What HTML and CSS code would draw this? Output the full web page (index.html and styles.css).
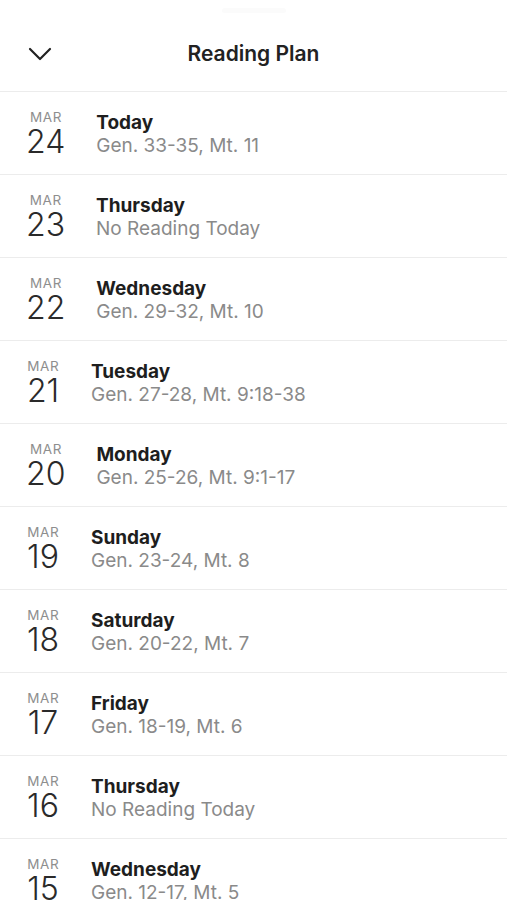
FILE: index.html
```html
<!DOCTYPE html>
<html lang="en">

<head>
    <meta charset="UTF-8">
    <meta name="viewport" content="width=device-width, initial-scale=1.0">
    <title>Reading Plan</title>
    <link rel="stylesheet" href="styles.css">
</head>

<body>
    <div class="sheet">
        <div class="grabber"></div>

        <!-- Thanh tiêu đề -->
        <div class="header">
            <button class="close">
                <svg width="24" height="14" viewBox="0 0 24 14">
                    <path d="M2 2 L12 12 L22 2" fill="none" stroke="#222" stroke-width="2.2" stroke-linecap="round" stroke-linejoin="round" />
                </svg>
            </button>
            <h1 class="title">Reading Plan</h1>
        </div>

        <!-- Danh sách ngày -->
        <ul class="plan">
            <li class="day">
                <div class="date"><span class="month">MAR</span><span class="num">24</span></div>
                <div class="info"><span class="name">Today</span><span class="passage">Gen. 33-35, Mt. 11</span></div>
            </li>
            <li class="day">
                <div class="date"><span class="month">MAR</span><span class="num">23</span></div>
                <div class="info"><span class="name">Thursday</span><span class="passage">No Reading Today</span></div>
            </li>
            <li class="day">
                <div class="date"><span class="month">MAR</span><span class="num">22</span></div>
                <div class="info"><span class="name">Wednesday</span><span class="passage">Gen. 29-32, Mt. 10</span></div>
            </li>
            <li class="day">
                <div class="date"><span class="month">MAR</span><span class="num">21</span></div>
                <div class="info"><span class="name">Tuesday</span><span class="passage">Gen. 27-28, Mt. 9:18-38</span></div>
            </li>
            <li class="day">
                <div class="date"><span class="month">MAR</span><span class="num">20</span></div>
                <div class="info"><span class="name">Monday</span><span class="passage">Gen. 25-26, Mt. 9:1-17</span></div>
            </li>
            <li class="day">
                <div class="date"><span class="month">MAR</span><span class="num">19</span></div>
                <div class="info"><span class="name">Sunday</span><span class="passage">Gen. 23-24, Mt. 8</span></div>
            </li>
            <li class="day">
                <div class="date"><span class="month">MAR</span><span class="num">18</span></div>
                <div class="info"><span class="name">Saturday</span><span class="passage">Gen. 20-22, Mt. 7</span></div>
            </li>
            <li class="day">
                <div class="date"><span class="month">MAR</span><span class="num">17</span></div>
                <div class="info"><span class="name">Friday</span><span class="passage">Gen. 18-19, Mt. 6</span></div>
            </li>
            <li class="day">
                <div class="date"><span class="month">MAR</span><span class="num">16</span></div>
                <div class="info"><span class="name">Thursday</span><span class="passage">No Reading Today</span></div>
            </li>
            <li class="day">
                <div class="date"><span class="month">MAR</span><span class="num">15</span></div>
                <div class="info"><span class="name">Wednesday</span><span class="passage">Gen. 12-17, Mt. 5</span></div>
            </li>
        </ul>
    </div>
</body>

</html>
```

FILE: styles.css
```css
body {
    margin: 0;
    font-family: Inter, "Noto Sans", sans-serif;
    background: #fff;
    color: #222;
}

.sheet {
    display: flex;
    flex-direction: column;
}

/* Thanh kéo mờ ở trên cùng */
.grabber {
    width: 64px;
    height: 5px;
    margin: 8px auto 0;
    border-radius: 3px;
    background: #fbfbfb;
}

.header {
    position: relative;
    display: flex;
    align-items: center;
    justify-content: center;
    height: 78px;
    border-bottom: 1px solid #ececec;
}

.close {
    position: absolute;
    left: 28px;
    top: 34px;
    padding: 0;
    border: none;
    background: none;
    display: flex;
}

.title {
    margin: 2px 0 0;
    font-size: 21px;
    font-weight: 600;
    color: #222;
}

.plan {
    list-style: none;
    margin: 0;
    padding: 0;
}

.day {
    display: flex;
    align-items: center;
    gap: 31px;
    height: 82px;
    padding-left: 26px;
    border-bottom: 1px solid #ececec;
}

.date {
    display: flex;
    flex-direction: column;
    align-items: center;
    min-width: 34px;
    margin-top: 2px;
}

.month {
    font-size: 13.5px;
    letter-spacing: 0.6px;
    line-height: 13px;
    color: #8e8e8e;
    margin-right: -0.6px;
}

.num {
    font-size: 32px;
    font-weight: 300;
    line-height: 36px;
    margin-bottom: -3px;
    color: #2a2a2a;
}

.info {
    display: flex;
    flex-direction: column;
    margin-top: 2px;
}

.name {
    font-size: 19px;
    font-weight: 700;
    line-height: 23px;
    color: #1e1e1e;
}

.passage {
    font-size: 19px;
    line-height: 23px;
    color: #8a8a8a;
}
```
